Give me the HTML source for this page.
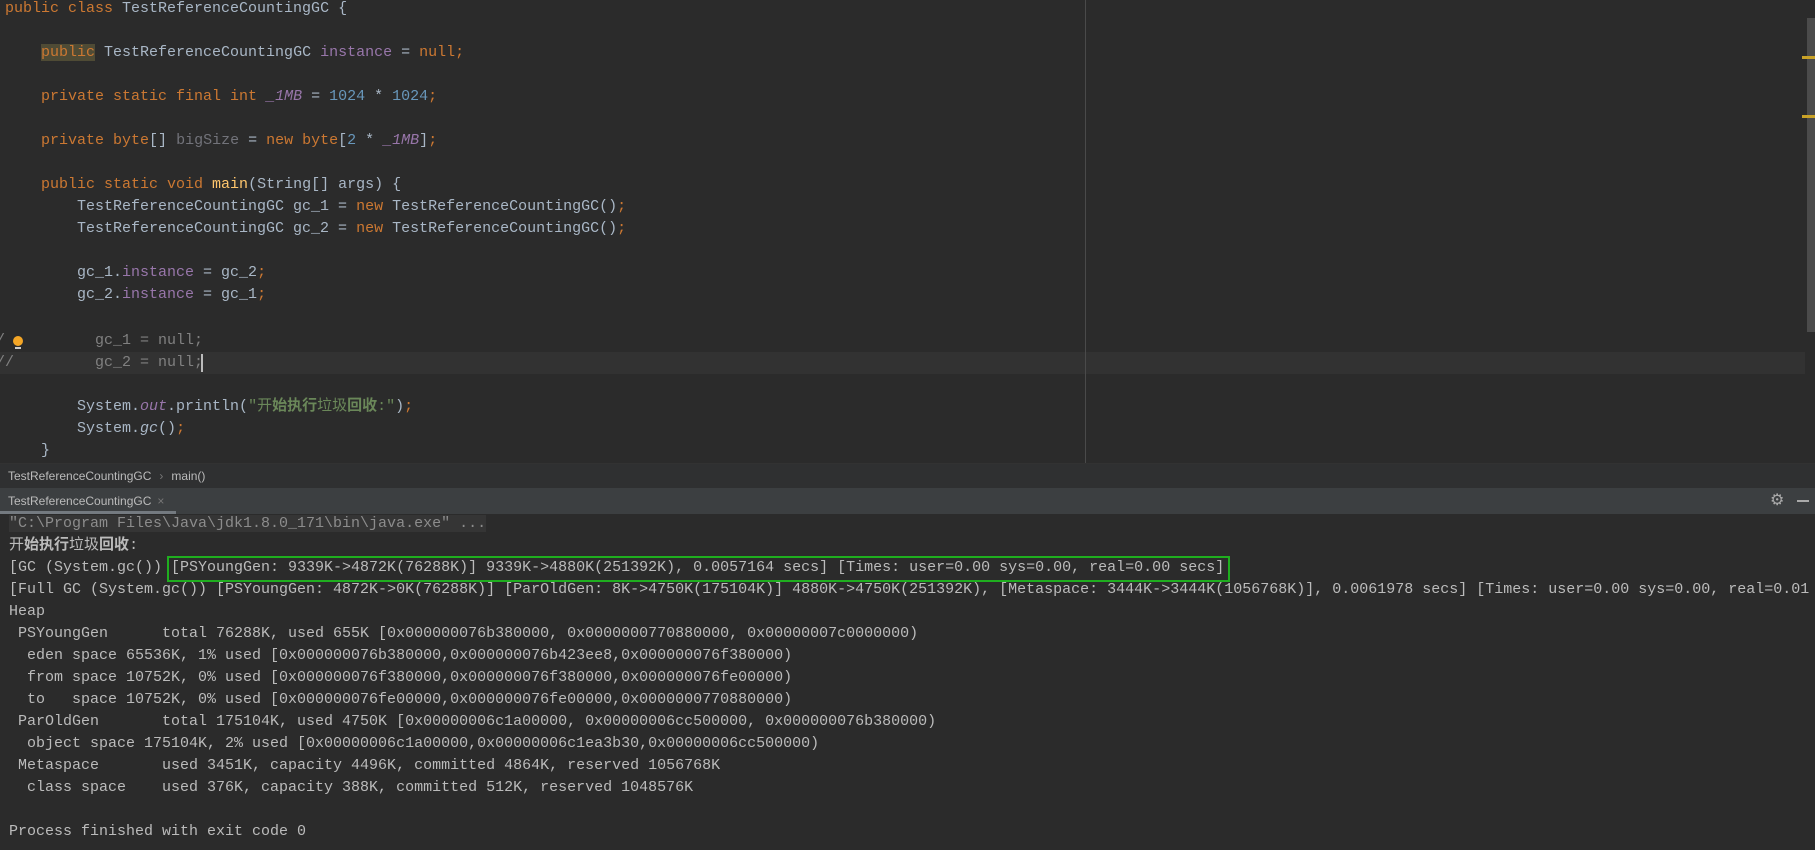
<!DOCTYPE html>
<html><head><meta charset="utf-8"><style>
body{margin:0;width:1815px;height:850px;background:#2b2b2b;overflow:hidden;position:relative;font-family:"Liberation Mono","Noto Sans CJK SC",monospace;font-size:15px;color:#a9b7c6}
.l{position:absolute;left:5px;height:22px;line-height:22px;white-space:pre}
.k{color:#cc7832}.f{color:#9876aa}.n{color:#6897bb}.m{color:#ffc66d}.s{color:#6a8759}.g{color:#72737a}.c{color:#808080}.i{font-style:italic}
.cl{position:absolute;left:9px;height:22px;line-height:22px;white-space:pre;color:#bbbbbb}
</style></head><body>
<div style="position:absolute;left:0;top:352px;width:1805px;height:22px;background:#323232"></div>
<div style="position:absolute;left:1085px;top:0;width:1px;height:463px;background:#4a4a4a"></div>
<div style="position:absolute;left:1807px;top:18px;width:8px;height:314px;background:#4b4b4b"></div>
<div style="position:absolute;left:1802px;top:56px;width:13px;height:3px;background:#c9a227"></div>
<div style="position:absolute;left:1802px;top:115px;width:13px;height:3px;background:#c9a227"></div>

<div class="l" style="top:-2px"><span class="k">public class </span>TestReferenceCountingGC {</div>
<div class="l" style="top:42px">    <span class="k" style="background:#4f4b35">public</span> TestReferenceCountingGC <span class="f">instance</span> = <span class="k">null;</span></div>
<div class="l" style="top:86px">    <span class="k">private static final int </span><span class="f i">_1MB</span> = <span class="n">1024</span> * <span class="n">1024</span><span class="k">;</span></div>
<div class="l" style="top:130px">    <span class="k">private byte</span>[] <span class="g">bigSize</span> = <span class="k">new byte</span>[<span class="n">2</span> * <span class="f i">_1MB</span>]<span class="k">;</span></div>
<div class="l" style="top:174px">    <span class="k">public static void </span><span class="m">main</span>(String[] args) {</div>
<div class="l" style="top:196px">        TestReferenceCountingGC gc_1 = <span class="k">new </span>TestReferenceCountingGC()<span class="k">;</span></div>
<div class="l" style="top:218px">        TestReferenceCountingGC gc_2 = <span class="k">new </span>TestReferenceCountingGC()<span class="k">;</span></div>
<div class="l" style="top:262px">        gc_1.<span class="f">instance</span> = gc_2<span class="k">;</span></div>
<div class="l" style="top:284px">        gc_2.<span class="f">instance</span> = gc_1<span class="k">;</span></div>
<div class="l c" style="top:330px;left:-4px">/          gc_1 = null;</div>
<div style="position:absolute;left:13px;top:336px;width:10px;height:10px;border-radius:50%;background:#f4a626"></div>
<div style="position:absolute;left:15px;top:347px;width:6px;height:2px;background:#ccc"></div>
<div class="l c" style="top:352px;left:-4px">//         gc_2 = null;</div>
<div style="position:absolute;left:201px;top:354px;width:2px;height:18px;background:#bbb"></div>
<div class="l" style="top:396px">        System.<span class="f i">out</span>.println(<span class="s">"开<b>始执行</b>垃圾<b>回收</b>:"</span>)<span class="k">;</span></div>
<div class="l" style="top:418px">        System.<span class="i">gc</span>()<span class="k">;</span></div>
<div class="l" style="top:440px">    }</div>

<div style="position:absolute;left:0;top:463px;width:1815px;height:25px;background:#2f3031;border-top:1px solid #323232;font-family:'Liberation Sans',sans-serif;font-size:12px;color:#bbb;line-height:25px"><span style="margin-left:8px">TestReferenceCountingGC</span><span style="color:#777;margin:0 8px">›</span>main()</div>
<div style="position:absolute;left:0;top:488px;width:1815px;height:26px;background:#3c3f41;font-family:'Liberation Sans',sans-serif;font-size:12px;color:#bbb;line-height:26px"><span style="margin-left:8px">TestReferenceCountingGC</span><span style="color:#777;margin-left:6px">×</span>
<div style="position:absolute;left:0;top:23px;width:176px;height:3px;background:#747a80"></div>
<div style="position:absolute;left:1770px;top:6px;color:#aaa;font-size:16px;line-height:14px">⚙</div>
<div style="position:absolute;left:1797px;top:12px;width:12px;height:2px;background:#aaa"></div></div>

<div class="cl" style="top:513px"><span style="color:#8c8c8c;background:#353535">"C:\Program Files\Java\jdk1.8.0_171\bin\java.exe" ...</span></div>
<div class="cl" style="top:535px">开<b>始执行</b>垃圾<b>回收</b>:</div>
<div class="cl" style="top:557px">[GC (System.gc()) [PSYoungGen: 9339K->4872K(76288K)] 9339K->4880K(251392K), 0.0057164 secs] [Times: user=0.00 sys=0.00, real=0.00 secs] </div>
<div style="position:absolute;left:167px;top:556px;width:1059px;height:22px;border:2px solid #1fae1f"></div>
<div class="cl" style="top:579px">[Full GC (System.gc()) [PSYoungGen: 4872K->0K(76288K)] [ParOldGen: 8K->4750K(175104K)] 4880K->4750K(251392K), [Metaspace: 3444K->3444K(1056768K)], 0.0061978 secs] [Times: user=0.00 sys=0.00, real=0.01</div>
<div class="cl" style="top:601px">Heap</div>
<div class="cl" style="top:623px"> PSYoungGen      total 76288K, used 655K [0x000000076b380000, 0x0000000770880000, 0x00000007c0000000)</div>
<div class="cl" style="top:645px">  eden space 65536K, 1% used [0x000000076b380000,0x000000076b423ee8,0x000000076f380000)</div>
<div class="cl" style="top:667px">  from space 10752K, 0% used [0x000000076f380000,0x000000076f380000,0x000000076fe00000)</div>
<div class="cl" style="top:689px">  to   space 10752K, 0% used [0x000000076fe00000,0x000000076fe00000,0x0000000770880000)</div>
<div class="cl" style="top:711px"> ParOldGen       total 175104K, used 4750K [0x00000006c1a00000, 0x00000006cc500000, 0x000000076b380000)</div>
<div class="cl" style="top:733px">  object space 175104K, 2% used [0x00000006c1a00000,0x00000006c1ea3b30,0x00000006cc500000)</div>
<div class="cl" style="top:755px"> Metaspace       used 3451K, capacity 4496K, committed 4864K, reserved 1056768K</div>
<div class="cl" style="top:777px">  class space    used 376K, capacity 388K, committed 512K, reserved 1048576K</div>
<div class="cl" style="top:821px">Process finished with exit code 0</div>
</body></html>
